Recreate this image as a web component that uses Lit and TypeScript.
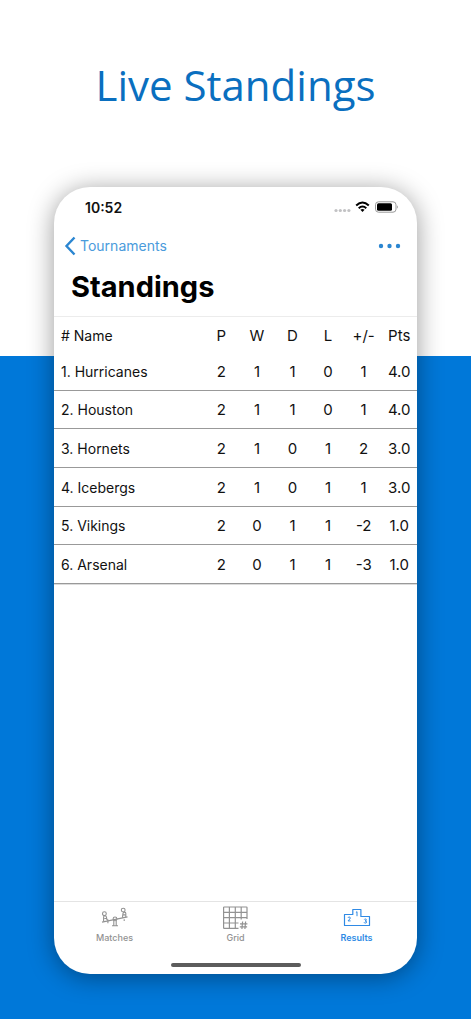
import { LitElement, html, css, svg } from "lit";
import { customElement, property } from "lit/decorators.js";

interface Team {
  name: string;
  played: number;
  won: number;
  drawn: number;
  lost: number;
  diff: number;
  points: string;
}

const TEAMS: Team[] = [
  { name: "Hurricanes", played: 2, won: 1, drawn: 1, lost: 0, diff: 1, points: "4.0" },
  { name: "Houston", played: 2, won: 1, drawn: 1, lost: 0, diff: 1, points: "4.0" },
  { name: "Hornets", played: 2, won: 1, drawn: 0, lost: 1, diff: 2, points: "3.0" },
  { name: "Icebergs", played: 2, won: 1, drawn: 0, lost: 1, diff: 1, points: "3.0" },
  { name: "Vikings", played: 2, won: 0, drawn: 1, lost: 1, diff: -2, points: "1.0" },
  { name: "Arsenal", played: 2, won: 0, drawn: 1, lost: 1, diff: -3, points: "1.0" },
];

const seesaw = svg`
  <g fill="none" stroke="currentColor" stroke-width="1.1">
    <path d="M1 14.6 26.5 9.4" />
    <circle cx="3.4" cy="6.2" r="1.9" />
    <path d="M2.6 14V9.4q0-1.2 1.2-1.2 1.3 0 1.6 1.2l.5 2.6 1 .4v3.4M3.4 11h2.4" />
    <circle cx="22.2" cy="2.6" r="1.9" />
    <path d="M24.8 9.6V5.8q0-1.2-1.2-1.2-1.3 0-1.6 1.2l-.4 2.8v1.6M21.600 7.4h2.6M23.200 11.800v1.700" />
    <circle cx="14" cy="11.4" r="1.9" />
    <path d="M12.8 13v4.8M15.2 13v4.8M11 18.2h6" />
  </g>`;

const gridIcon = svg`
  <g fill="none" stroke="currentColor" stroke-width="1.2">
    <path d="M16.5 22.4H2.2Q1.6 22.4 1.6 21.8V1.6Q1.6 1 2.2 1H24.4Q25 1 25 1.6V13" />
    <path d="M1.6 6.4H25M1.6 11.7H25M1.6 17H16.5M7.4 1V22.4M13.3 1V22.4M19.2 1V13.5" />
    <path d="M20.6 15.5 19.9 23M23.6 15.5 22.9 23M18 17.8H25.4M17.8 20.8H25.1" />
  </g>`;

const podium = svg`
  <path d="M1.5 6.5H9.8V1.5H17.9V8.5H26.5V17.5H1.5Z" fill="none"
    stroke="currentColor" stroke-width="1.2" stroke-linejoin="round" />
  <g fill="none" stroke="currentColor" stroke-width="1">
    <path d="M12.9 4.5 14 3.7V8.2" />
    <path d="M5 9.9Q5.2 9 6.2 9 7.3 9 7.3 10 7.3 10.7 5 12.9H7.6" />
    <path d="M21.2 11.6Q21.5 11 22.3 11 23.4 11 23.4 11.9 23.4 12.9 22 12.9 23.6 12.9 23.6 14 23.6 15.1 22.3 15.1 21.3 15.1 21 14.3" />
  </g>`;

@customElement("status-bar")
class StatusBar extends LitElement {
  static styles = css`
    :host {
      display: flex;
      align-items: center;
      justify-content: space-between;
      height: 40px;
      padding: 0 18px 0 31px;
    }
    .time {
      font-size: 14px;
      font-weight: 600;
    }
    .signals {
      display: block;
    }
  `;

  render() {
    return html`
      <span class="time">10:52</span>
      <svg class="signals" width="65" height="14" viewBox="0 0 65 14" aria-hidden="true">
        <g fill="#c2c2c4">
          <circle cx="2" cy="10.5" r="1.6" /><circle cx="6.3" cy="10.5" r="1.6" />
          <circle cx="10.6" cy="10.5" r="1.6" /><circle cx="14.9" cy="10.5" r="1.6" />
        </g>
        <g fill="none" stroke="#000" stroke-width="2">
          <path d="M22.2 5.5Q28.500 -0.5 34.800 5.5" />
          <path d="M24.7 8.3Q28.500 4.8 32.3 8.3" />
        </g>
        <path d="M26.4 9.7Q28.5 8.1 30.6 9.7L28.5 12Z" />
        <rect x="41.5" y="1.8" width="20.500" height="10.400" rx="3" fill="none" stroke="#9a9a9a" />
        <rect x="43" y="3.300" width="15" height="7.400" rx="1.5" />
        <path d="M63 5.3Q64.5 7 63 8.7Z" fill="#777" />
      </svg>
    `;
  }
}

@customElement("standings-table")
class StandingsTable extends LitElement {
  @property({ attribute: false }) teams: Team[] = [];

  static styles = css`
    :host {
      display: block;
    }
    .table {
      width: 100%;
      height: 268px;
      table-layout: fixed;
      border-collapse: separate;
      border-spacing: 0;
      border-bottom: 1px solid #dcdcdc;
      font-size: 15px;
      line-height: 20px;
    }
    .cell {
      padding: 2px 0 0;
      font-weight: 400;
      text-align: center;
    }
    .stat {
      width: 9.8%;
    }
    .name {
      padding-left: 7px;
      font-size: 14px;
      text-align: left;
    }
    .head .cell {
      height: 33px;
    }
    .row .cell {
      border-bottom: 1px solid #999;
    }
  `;

  render() {
    return html`
      <table class="table">
        <thead>
          <tr class="head">
            <th class="cell name" scope="col"># Name</th>
            ${["P", "W", "D", "L", "+/-", "Pts"].map(
              (label) => html`<th class="cell stat" scope="col">${label}</th>`
            )}
          </tr>
        </thead>
        <tbody>
          ${this.teams.map(
            (t, i) => html`<tr class="row">
              <th class="cell name" scope="row">${i + 1}. ${t.name}</th>
              ${[t.played, t.won, t.drawn, t.lost, t.diff, t.points].map(
                (value) => html`<td class="cell">${value}</td>`
              )}
            </tr>`
          )}
        </tbody>
      </table>
    `;
  }
}

@customElement("tab-bar")
class TabBar extends LitElement {
  static styles = css`
    :host {
      display: block;
      border-top: 1px solid #e4e4e4;
    }
    .tabs {
      display: grid;
      grid-template-columns: repeat(3, 1fr);
      height: 58px;
    }
    .tab {
      display: flex;
      flex-direction: column;
      align-items: center;
      gap: 2px;
      padding: 4px 0 0;
      border: 0;
      background: none;
      color: #929292;
      font-family: inherit;
      font-size: 9px;
      font-weight: 500;
      line-height: 12px;
    }
    .active {
      color: #2f8ae5;
      font-weight: 600;
    }
    .home {
      width: 130px;
      height: 4px;
      margin: 3px auto 7px;
      border-radius: 2px;
      background: #5c5c5c;
    }
  `;

  render() {
    return html`
      <nav class="tabs">
        <button class="tab">
          <svg width="28" height="24" viewBox="0 -1.5 28 24" aria-hidden="true">${seesaw}</svg>
          Matches
        </button>
        <button class="tab">
          <svg width="27" height="24" viewBox="0 0 27 24" aria-hidden="true">${gridIcon}</svg>
          Grid
        </button>
        <button class="tab active" aria-current="page">
          <svg width="28" height="24" viewBox="0 -2 28 24" aria-hidden="true">${podium}</svg>
          Results
        </button>
      </nav>
      <div class="home"></div>
    `;
  }
}

@customElement("app-root")
class AppRoot extends LitElement {
  static styles = css`
    :host {
      display: flex;
      flex-direction: column;
      box-sizing: border-box;
      min-height: 100vh;
      padding: 51px 54px 45px;
      background: linear-gradient(#fff 34.9%, #0078d9 34.9%);
      color: #111;
      font-family: Inter, "Liberation Sans", sans-serif;
    }
    .headline {
      margin: 0 0 68px;
      color: #0a6fbf;
      font-family: "Open Sans", "Noto Sans", sans-serif;
      font-size: 42px;
      font-weight: 400;
      line-height: 68px;
      text-align: center;
      white-space: nowrap;
    }
    .phone {
      display: flex;
      flex: 1;
      flex-direction: column;
      border-radius: 36px;
      background: #fff;
      box-shadow: 0 3px 26px rgba(0, 0, 0, 0.4);
      overflow: hidden;
    }
    .nav {
      display: flex;
      align-items: center;
      justify-content: space-between;
      height: 37px;
      padding: 0 16px 0 10px;
    }
    .back {
      display: flex;
      align-items: center;
      gap: 4px;
      color: #4a9bdc;
      font-size: 14px;
      line-height: 20px;
      text-decoration: none;
    }
    .more {
      display: flex;
      padding: 0;
      border: 0;
      background: none;
    }
    .title {
      margin: 0;
      padding: 3px 17px 9px;
      border-bottom: 1px solid #ececec;
      color: #000;
      font-size: 29px;
      font-weight: 700;
      line-height: 40px;
    }
    .content {
      flex: 1;
    }
  `;

  render() {
    return html`
      <h1 class="headline">Live Standings</h1>
      <main class="phone">
        <status-bar></status-bar>
        <div class="nav">
          <a class="back" href="#tournaments">
            <svg width="12" height="20" viewBox="0 0 12 20" aria-hidden="true">
              <path d="M10.5 1.5 2.5 10l8 8.5" fill="none" stroke="#2b86d1" stroke-width="2.4" />
            </svg>
            Tournaments
          </a>
          <button class="more" aria-label="More">
            <svg width="23" height="6" viewBox="0 0 23 6" aria-hidden="true">
              <g fill="#2b86d1">
                <circle cx="3" cy="3" r="2.2" /><circle cx="11.5" cy="3" r="2.2" />
                <circle cx="20" cy="3" r="2.2" />
              </g>
            </svg>
          </button>
        </div>
        <h2 class="title">Standings</h2>
        <div class="content">
          <standings-table .teams=${TEAMS}></standings-table>
        </div>
        <tab-bar></tab-bar>
      </main>
    `;
  }
}
